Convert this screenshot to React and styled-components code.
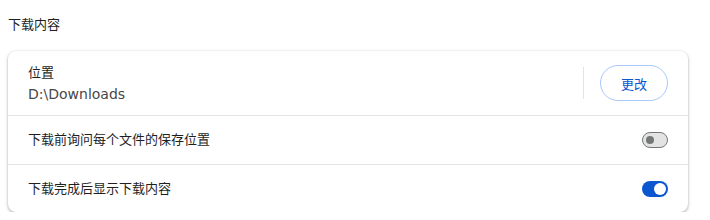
import React from 'react'
import styled, { createGlobalStyle } from 'styled-components'

const Global = createGlobalStyle`
  body {
    margin: 0;
    background: #fff;
    font-family: "DejaVu Sans", "Noto Sans CJK SC", sans-serif;
    color: #1f1f1f;
  }
`

const Page = styled.div`
  padding: 0 22px 0 8px;
`

const Title = styled.h2`
  margin: 0;
  padding-top: 15px;
  height: 36px;
  font-size: 13px;
  font-weight: 400;
  line-height: 20px;
  color: #1f1f1f;
`

const Card = styled.div`
  background: #fff;
  border-radius: 8px;
  box-shadow: 0 1px 2px rgba(60, 64, 67, 0.3), 0 1px 3px 1px rgba(60, 64, 67, 0.15);
`

const Row = styled.div`
  display: flex;
  align-items: center;
  padding: 0 20px;
  height: ${p => p.$h}px;
  border-top: ${p => p.$first ? 'none' : '1px solid #e3e3e3'};
`

const Label = styled.div`
  flex: 1;
  font-size: 13px;
  line-height: 20px;
`

const Sub = styled.div`
  color: #474747;
  font-size: 14px;
  line-height: 20px;
  padding-top: 1px;
`

const Separator = styled.div`
  width: 1px;
  height: 32px;
  background: #e3e3e3;
  margin: 0 16px;
`

const Button = styled.button`
  height: 36px;
  padding: 0 20px;
  border-radius: 18px;
  border: 1px solid #a8c7fa;
  background: #fff;
  color: #0b57d0;
  font-family: inherit;
  font-size: 13px;
`

const Toggle = styled.div`
  position: relative;
  width: 26px;
  height: 16px;
  border-radius: 8px;
  box-sizing: border-box;
  background: ${p => p.$on ? '#0b57d0' : '#e3e3e3'};
  border: ${p => p.$on ? 'none' : '1px solid #747775'};

  &::after {
    content: '';
    position: absolute;
    top: 50%;
    transform: translateY(-50%);
    border-radius: 50%;
    background: ${p => p.$on ? '#fff' : '#747775'};
    width: ${p => p.$on ? 12 : 8}px;
    height: ${p => p.$on ? 12 : 8}px;
    left: ${p => p.$on ? 12 : 3}px;
  }
`

export default function App() {
  return (
    <>
      <Global />
      <Page>
        <Title>下载内容</Title>
        <Card>
          <Row $first $h={64}>
            <Label>
              位置
              <Sub>D:\Downloads</Sub>
            </Label>
            <Separator />
            <Button>更改</Button>
          </Row>
          <Row $h={48}>
            <Label>下载前询问每个文件的保存位置</Label>
            <Toggle />
          </Row>
          <Row $h={47}>
            <Label>下载完成后显示下载内容</Label>
            <Toggle $on />
          </Row>
        </Card>
      </Page>
    </>
  )
}
